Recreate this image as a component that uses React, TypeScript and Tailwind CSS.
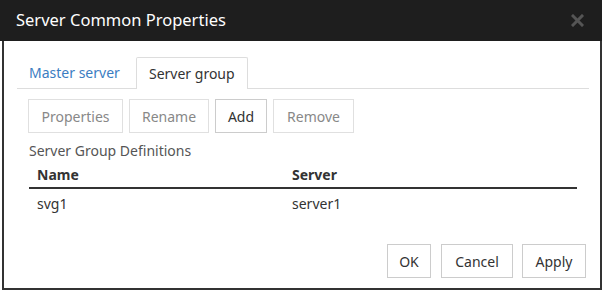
export default function App() {
  const tools = [
    { label: "Properties", w: "w-[95px]", on: false },
    { label: "Rename", w: "w-[80px]", on: false },
    { label: "Add", w: "w-[52px]", on: true },
    { label: "Remove", w: "w-[81px]", on: false },
  ];

  return (
    <div
      className="w-[604px] h-[292px] bg-white text-[#333]"
      style={{ fontFamily: '"Noto Sans", "Open Sans", Arial, sans-serif' }}
    >
      <div className="w-[602px] h-[290px] flex flex-col">
        {/* title bar */}
        <div className="h-[41px] bg-[#1e1e1e] flex items-center justify-between pl-[16px] pr-[18px]">
          <span className="text-white text-[16.5px] leading-none">Server Common Properties</span>
          <svg width="13" height="13" viewBox="0 0 13 13">
            <path d="M2 2 L11 11 M11 2 L2 11" stroke="#555" strokeWidth="3" strokeLinecap="square" />
          </svg>
        </div>

        {/* body */}
        <div className="flex-1 ml-[2px] border-x-2 border-b-2 border-[#333] flex flex-col px-[13px]">
          {/* tabs */}
          <div className="mt-[16px] flex items-end border-b border-[#ddd] w-[572px] h-[32px]">
            <div className="pl-[12px] pr-[16px] h-[31px] flex items-center text-[14px] text-[#3b7dc2]">Master server</div>
            <div className="w-[112px] h-[32px] flex items-center justify-center text-[14px] text-[#333] border border-b-0 border-[#ddd] bg-white -mb-px rounded-t-[2px]">
              Server group
            </div>
          </div>

          {/* toolbar */}
          <div className="mt-[10px] ml-[11px] flex gap-[6px]">
            {tools.map((t) => (
              <div
                key={t.label}
                className={`${t.w} h-[34px] flex items-center justify-center text-[14px] border ${
                  t.on ? "border-[#ccc] text-[#333]" : "border-[#e0e0e0] text-[#888]"
                }`}
              >
                {t.label}
              </div>
            ))}
          </div>

          <div className="ml-[12px] mt-[8px] text-[14px] text-[#555] leading-[20px]">Server Group Definitions</div>

          {/* table */}
          <div className="ml-[12px] w-[548px]">
            <div className="flex h-[26px] items-center text-[14px] font-bold text-[#333]">
              <div className="pl-[8px] w-[263px]">Name</div>
              <div>Server</div>
            </div>
            <div className="h-[2px] bg-[#333]" />
            <div className="flex h-[28px] items-center text-[14px] text-[#333]">
              <div className="pl-[8px] w-[263px]">svg1</div>
              <div>server1</div>
            </div>
          </div>

          {/* footer */}
          <div className="mt-auto mb-[10px] flex justify-end gap-[9px] pr-[1px]">
            <div className="w-[44px] h-[34px] mr-[1px] flex items-center justify-center text-[14px] border border-[#ccc]">OK</div>
            <div className="w-[72px] h-[34px] flex items-center justify-center text-[14px] border border-[#ccc]">Cancel</div>
            <div className="w-[64px] h-[34px] flex items-center justify-center text-[14px] border border-[#ccc]">Apply</div>
          </div>
        </div>
      </div>
    </div>
  );
}
